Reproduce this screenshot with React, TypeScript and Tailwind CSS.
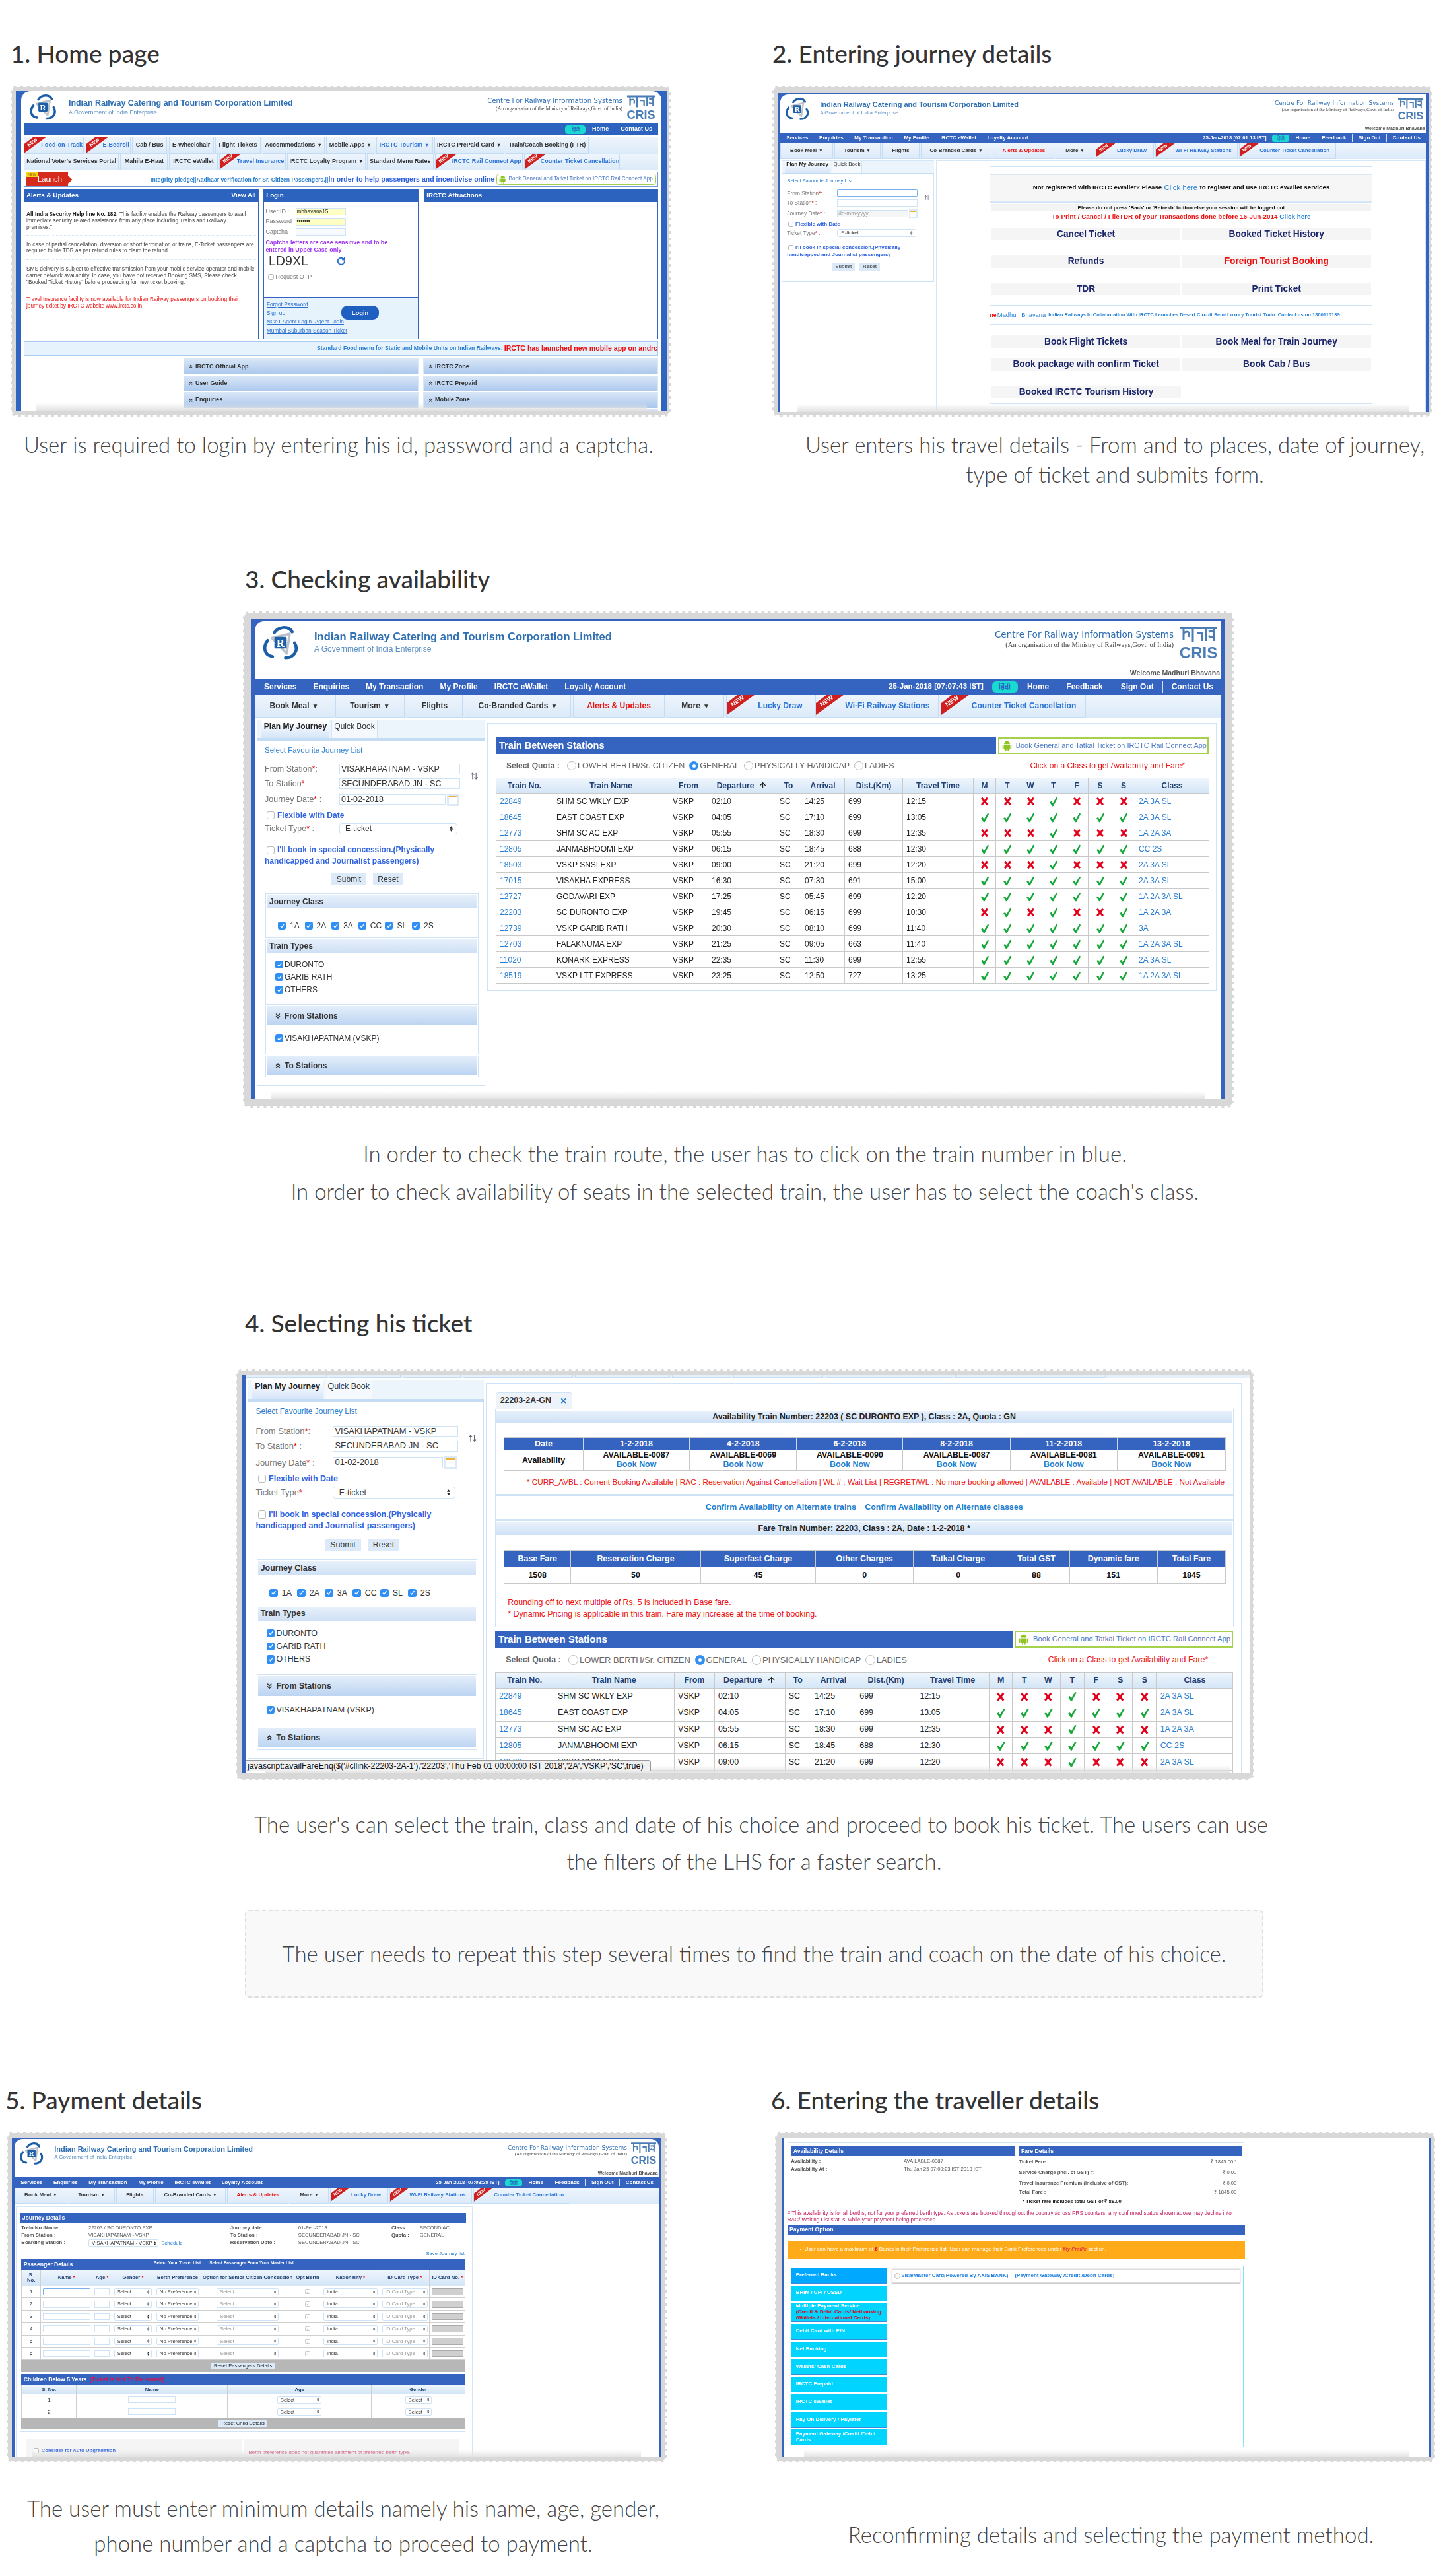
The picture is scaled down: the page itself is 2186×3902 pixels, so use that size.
import * as React from "react";
import { ChevronsDown, ChevronsUp, RotateCw, ArrowUp, ArrowUpDown, X } from "lucide-react";

// ---------- small drawings ----------

function RailLogo() {
  return (
    <svg viewBox="0 0 60 56" className="w-[56px] h-[52px] shrink-0" fill="none">
      <path d="M16 20 L45 13 L40 45 Z" stroke="#bcc2c9" strokeWidth="4" strokeLinejoin="round" />
      <path d="M20 11 C28 0 44 0 49 10" stroke="#1d5ea8" strokeWidth="5" strokeLinecap="round" />
      <path d="M9 24 C1 34 3 48 17 50" stroke="#1d5ea8" strokeWidth="5" strokeLinecap="round" />
      <path d="M53 28 C60 40 52 52 38 52" stroke="#1d5ea8" strokeWidth="5" strokeLinecap="round" />
      <rect x="20" y="18" width="20" height="19" rx="2" fill="#1d5ea8" />
      <text x="30" y="34" textAnchor="middle" fontSize="18" fontWeight="700" fill="#fff" fontFamily="Liberation Serif">R</text>
    </svg>
  );
}

function CrisLogo() {
  return (
    <div className="w-[57px] shrink-0 flex flex-col items-center text-[#4a7db5]">
      <svg viewBox="0 0 57 30" className="w-[57px] h-[30px]" fill="none" stroke="#4a7db5" strokeWidth="3">
        <path d="M0 4 H57" strokeWidth="4" />
        <path d="M6 4 V22 M6 12 C12 8 16 10 14 18 M20 4 V26 M26 12 H34 V24 M40 4 V24 M44 10 C50 8 54 10 52 16 C50 20 46 18 44 16 M52 4 V24" />
      </svg>
      <span className="font-['Liberation_Sans',sans-serif] text-[24px] leading-[24px] font-bold">CRIS</span>
    </div>
  );
}

function Tick() {
  return (
    <svg viewBox="0 0 16 18" className="w-[14px] h-[15px] inline-block">
      <path d="M1 10 L4 8 L6.5 12 L13 1 L15.5 2 L7.5 17 H5.5 Z" fill="#17a83c" />
    </svg>
  );
}

function Cross() {
  return (
    <svg viewBox="0 0 14 16" className="w-[13px] h-[14px] inline-block">
      <path d="M2 2 L12 14 M12 2 L2 14" stroke="#e3001b" strokeWidth="3.4" />
    </svg>
  );
}

function Android() {
  return (
    <svg viewBox="0 0 16 20" className="w-[15px] h-[18px] shrink-0" fill="#8fc31f">
      <path d="M3 7 a5 5 0 0 1 10 0 Z" />
      <rect x="3" y="8" width="10" height="8" rx="1" />
      <rect x="0.5" y="8" width="2" height="7" rx="1" />
      <rect x="13.5" y="8" width="2" height="7" rx="1" />
      <rect x="5" y="15" width="2" height="4" rx="1" />
      <rect x="9" y="15" width="2" height="4" rx="1" />
    </svg>
  );
}

function NewRibbon() {
  return (
    <svg viewBox="0 0 43 31" className="absolute left-0 top-0 w-[43px] h-[31px]">
      <path d="M0 13 L17 0 H43 L0 31 Z" fill="#cf1f1f" />
      <text x="0" y="0" transform="translate(9 19) rotate(-36)" fontSize="9.5" fontWeight="700" fill="#fff" fontFamily="Liberation Sans">NEW</text>
    </svg>
  );
}

function Check({ on }: { on?: boolean }) {
  if (on) {
    return (
      <span className="w-[12px] h-[12px] rounded-[3px] bg-[#2f8ff5] flex items-center justify-center shrink-0">
        <svg viewBox="0 0 10 10" className="w-[9px] h-[9px]" fill="none" stroke="#fff" strokeWidth="1.4">
          <path d="M2 5 L4 7.5 L8 2" />
        </svg>
      </span>
    );
  }
  return <span className="w-[12px] h-[12px] rounded-[3px] border border-[#bbb] bg-white shrink-0" />;
}

function Radio({ on }: { on?: boolean }) {
  return on ? (
    <span className="w-[14px] h-[14px] rounded-full bg-[#2f8ff5] flex items-center justify-center shrink-0">
      <span className="w-[5px] h-[5px] rounded-full bg-white" />
    </span>
  ) : (
    <span className="w-[14px] h-[14px] rounded-full border border-[#bbb] bg-white shrink-0" />
  );
}

function SelectArrows() {
  return (
    <svg viewBox="0 0 6 10" className="w-[5px] h-[9px] shrink-0" fill="#222">
      <path d="M3 0 L6 4 H0 Z M3 10 L0 6 H6 Z" />
    </svg>
  );
}

// ---------- shared page chrome ----------

type TabItem = { label: string; w: string; tone?: "red" | "blue"; isNew?: boolean; caret?: boolean };

const trainMenu: TabItem[] = [
  { label: "Book Meal", w: "w-[119px]", caret: true },
  { label: "Tourism", w: "w-[105px]", caret: true },
  { label: "Flights", w: "w-[85px]" },
  { label: "Co-Branded Cards", w: "w-[161px]", caret: true },
  { label: "Alerts & Updates", w: "w-[139px]", tone: "red" },
  { label: "More", w: "w-[87px]", caret: true },
  { label: "Lucky Draw", w: "w-[132px]", tone: "blue", isNew: true },
  { label: "Wi-Fi Railway Stations", w: "w-[187px]", tone: "blue", isNew: true },
  { label: "Counter Ticket Cancellation", w: "w-[220px]", tone: "blue", isNew: true },
];

const homeMenuOne: TabItem[] = [
  { label: "Food-on-Track", w: "w-[121px]", tone: "blue", isNew: true },
  { label: "E-Bedroll", w: "w-[90px]", tone: "blue", isNew: true },
  { label: "Cab / Bus", w: "w-[71px]" },
  { label: "E-Wheelchair", w: "w-[90px]" },
  { label: "Flight Tickets", w: "w-[92px]" },
  { label: "Accommodations", w: "w-[125px]", caret: true },
  { label: "Mobile Apps", w: "w-[97px]", caret: true },
  { label: "IRCTC Tourism", w: "w-[114px]", tone: "blue", caret: true },
  { label: "IRCTC PrePaid Card", w: "w-[140px]", caret: true },
  { label: "Train/Coach Booking (FTR)", w: "w-[167px]" },
];

const homeMenuTwo: TabItem[] = [
  { label: "National Voter's Services Portal", w: "w-[191px]" },
  { label: "Mahila E-Haat", w: "w-[95px]" },
  { label: "IRCTC eWallet", w: "w-[97px]" },
  { label: "Travel Insurance", w: "w-[134px]", tone: "blue", isNew: true },
  { label: "IRCTC Loyalty Program", w: "w-[157px]", caret: true },
  { label: "Standard Menu Rates", w: "w-[133px]" },
  { label: "IRCTC Rail Connect App", w: "w-[176px]", tone: "blue", isNew: true },
  { label: "Counter Ticket Cancellation", w: "w-[192px]", tone: "blue", isNew: true },
];

function MenuStrip({ items, height }: { items: TabItem[]; height: string }) {
  return (
    <div className={`flex gap-[3px] bg-gradient-to-b from-[#eef5fc] to-[#dbeaf9] ${height}`}>
      {items.map((t) => (
        <div
          key={t.label}
          className={`relative flex items-center justify-center shrink-0 border-x border-b border-[#c4dcf4] text-[12px] font-bold ${t.w} ${
            t.tone === "red" ? "text-[#ee1111]" : t.tone === "blue" ? "text-[#2c74d6]" : "text-[#333]"
          } ${t.isNew ? "pl-[32px]" : ""}`}
        >
          {t.isNew && <NewRibbon />}
          <span className="whitespace-nowrap">
            {t.label}
            {t.caret && <span className="ml-[4px] text-[10px]">▼</span>}
          </span>
        </div>
      ))}
    </div>
  );
}

function HeaderBand({ welcome, height }: { welcome?: boolean; height: string }) {
  return (
    <div className={`flex justify-between overflow-hidden ${height}`}>
      <div className="flex">
        <div className="ml-[11px] mt-[7px]">
          <RailLogo />
        </div>
        <div className="ml-[23px] mt-[14px]">
          <div className="text-[16.5px] leading-[19px] font-bold text-[#2f6fb3] whitespace-nowrap">
            Indian Railway Catering and Tourism Corporation Limited
          </div>
          <div className="text-[12px] leading-[16px] mt-[1px] text-[#5a8fc4]">A Government of India Enterprise</div>
        </div>
      </div>
      <div className="flex flex-col items-end">
        <div className="flex mt-[6px] mr-[6px] gap-[9px]">
          <div className="text-right mt-[5px]">
            <div className="font-['DejaVu_Sans',sans-serif] text-[13.5px] leading-[18px] text-[#2f6fb3] whitespace-nowrap">
              Centre For Railway Information Systems
            </div>
            <div className="font-['Liberation_Serif',serif] text-[10.5px] leading-[14px] text-[#444] whitespace-nowrap">
              (An organisation of the Ministry of Railways,Govt. of India)
            </div>
          </div>
          <CrisLogo />
        </div>
        {welcome && (
          <div className="mt-auto mb-[3px] mr-[2px] text-[10.5px] leading-[12px] font-bold text-[#555]">Welcome Madhuri Bhavana</div>
        )}
      </div>
    </div>
  );
}

function NavBar({ time }: { time: string }) {
  return (
    <div className="h-[24px] bg-[#3563c0] flex items-center justify-between text-white text-[12px] font-bold pl-[14px] pr-[12px] whitespace-nowrap">
      <div className="flex gap-[25px]">
        <span>Services</span>
        <span>Enquiries</span>
        <span>My Transaction</span>
        <span>My Profile</span>
        <span>IRCTC eWallet</span>
        <span>Loyalty Account</span>
      </div>
      <div className="flex items-center">
        <span className="text-[11.5px] mr-[13px]">{time}</span>
        <span className="w-[39px] h-[17px] rounded-[6px] bg-[#1ad9d0] text-[#2a64c0] text-[11px] leading-[17px] text-center mr-[14px]">हिंदी</span>
        <span className="pr-[12px] border-r border-white/80">Home</span>
        <span className="px-[13px] border-r border-white/80">Feedback</span>
        <span className="px-[13px] border-r border-white/80">Sign Out</span>
        <span className="pl-[13px]">Contact Us</span>
      </div>
    </div>
  );
}

function Frame({ outer, inner, children }: { outer: string; inner: string; children: React.ReactNode }) {
  return (
    <div className={`box-border border-2 border-dashed border-white rounded-[9px] bg-[#d8d8d8] ${outer}`}>
      <div className={`relative h-full overflow-hidden ${inner}`}>
        {children}
        <div className="absolute bottom-0 inset-x-[30px] h-[12px] bg-gradient-to-t from-[#e2e2e2] to-transparent" />
      </div>
    </div>
  );
}

// ---------- journey form + filters ----------

function FilterHead({ label, tall, open }: { label: string; tall?: boolean; open?: boolean }) {
  if (tall) {
    return (
      <div className="mx-[1px] mt-[2px] h-[29px] flex items-center pl-[11px] gap-[4px] bg-gradient-to-b from-[#e4eefa] to-[#bcd4f2] text-[12px] font-bold text-[#333]">
        {open ? <ChevronsDown size={12} strokeWidth={3} /> : <ChevronsUp size={12} strokeWidth={3} />}
        {label}
      </div>
    );
  }
  return (
    <div className="mx-[1px] mt-[1px] h-[21px] flex items-center pl-[4px] bg-gradient-to-b from-[#e8f1fb] to-[#cfe0f5] text-[12px] font-bold text-[#333]">
      {label}
    </div>
  );
}

function Filters() {
  return (
    <div className="ml-[12px] w-[323px] mt-[12px] text-[12px] text-[#333] mb-[12px]">
      <div className="h-[68px] border border-[#cfe3f7]">
        <FilterHead label="Journey Class" />
        <div className="flex pl-[18px] mt-[17px]">
          {["1A", "2A", "3A", "CC", "SL", "2S"].map((c) => (
            <div key={c} className="w-[40.6px] flex items-center gap-[6px]">
              <Check on />
              <span>{c}</span>
            </div>
          ))}
        </div>
      </div>
      <div className="h-[100px] border border-t-0 border-[#cfe3f7]">
        <FilterHead label="Train Types" />
        <div className="flex flex-col gap-[7px] pl-[14px] mt-[12px] leading-[12px]">
          {["DURONTO", "GARIB RATH", "OTHERS"].map((t) => (
            <div key={t} className="flex items-center gap-[2px]">
              <Check on />
              <span>{t}</span>
            </div>
          ))}
        </div>
      </div>
      <div className="h-[73px] border border-t-0 border-[#cfe3f7]">
        <FilterHead label="From Stations" tall open />
        <div className="flex items-center gap-[2px] pl-[14px] mt-[14px] leading-[12px]">
          <Check on />
          <span>VISAKHAPATNAM (VSKP)</span>
        </div>
      </div>
      <div className="h-[33px] border border-t-0 border-[#cfe3f7]">
        <FilterHead label="To Stations" tall />
      </div>
    </div>
  );
}

function FieldLabel({ text, after }: { text: string; after: string }) {
  return (
    <span className="w-[113px] shrink-0 text-[12.5px] text-[#777]">
      {text}
      <span className="text-[#e00]">*</span>
      {after}
    </span>
  );
}

function JourneySidebar({ from, to, date, placeholder, children }: { from: string; to: string; date: string; placeholder?: boolean; children?: React.ReactNode }) {
  return (
    <div className="w-[346px] shrink-0 ml-[3px] mt-[3px]">
      <div className="h-[32px] flex pl-[7px] gap-[3px] border-b-[4px] border-[#c5dcf5] bg-[#edf5fc] text-[12px] border-t border-t-[#d5e6f7]">
        <div className="w-[103px] h-full bg-gradient-to-b from-white to-[#d5e5f8] font-bold text-[#222] text-center leading-[16px] pt-[1px]">Plan My Journey</div>
        <div className="w-[70px] h-[27px] bg-[#f5f9fd] border-x border-[#d0e3f7] text-[#333] text-center leading-[16px] pt-[1px]">Quick Book</div>
      </div>
      <div className="border border-t-0 border-[#cfe3f7]">
        <div className="h-[32px] pl-[11px] pt-[6px] text-[11.5px] text-[#2a80d0]">Select Favourite Journey List</div>
        <div className="relative">
          <div className="h-[22px] flex items-center pl-[11px]">
            <FieldLabel text="From Station" after=":" />
            <div className={`w-[183px] h-[16px] border bg-white text-[12.5px] leading-[14px] pl-[2px] text-[#333] ${placeholder ? "border-2 border-[#79aef0] rounded-[2px]" : "border-[#cfe3f7]"}`}>{from}</div>
          </div>
          <div className="h-[22px] flex items-center pl-[11px]">
            <FieldLabel text="To Station" after=" :" />
            <div className="w-[183px] h-[16px] border border-[#cfe3f7] bg-white text-[12.5px] leading-[14px] pl-[2px] text-[#333]">{to}</div>
          </div>
          <ArrowUpDown size={13} className="absolute left-[322px] top-[15px] text-[#667]" />
        </div>
        <div className="h-[26px] flex items-center pl-[11px]">
          <FieldLabel text="Journey Date" after=" :" />
          <div className={`w-[161px] h-[16px] border border-[#cfe3f7] text-[12.5px] leading-[14px] pl-[2px] ${placeholder ? "bg-[#f4f6f8] text-[#999]" : "bg-white text-[#333]"}`}>{date}</div>
          <div className="w-[19px] h-[19px] ml-[2px] bg-[#dce9f7] p-[3px]">
            <div className="h-full border-t-[3px] border-[#f0b030] bg-white" />
          </div>
        </div>
        <div className="h-[22px] flex items-center pl-[14px] gap-[4px] text-[12px] font-bold text-[#2f63e0]">
          <Check />
          <span>Flexible with Date</span>
        </div>
        <div className="h-[18px] flex items-center pl-[11px]">
          <FieldLabel text="Ticket Type" after=" :" />
          <div className="w-[179px] h-[17px] border border-[#cfe3f7] rounded-[4px] bg-white flex items-center justify-between pl-[8px] pr-[6px] text-[12px] text-[#333]">
            E-ticket
            <SelectArrows />
          </div>
        </div>
        <div className="mt-[15px] pl-[11px] text-[12px] leading-[17px] font-bold text-[#2f63e0]">
          <div className="flex items-center gap-[4px] pl-[3px]">
            <Check />
            <span>I'll book in special concession.(Physically</span>
          </div>
          <div>handicapped and Journalist passengers)</div>
        </div>
        <div className="flex gap-[10px] pl-[112px] mt-[10px] text-[12px] text-[#333]">
          <div className="w-[53px] h-[18px] bg-[#dbe9f8] text-center leading-[18px]">Submit</div>
          <div className="w-[46px] h-[18px] bg-[#dbe9f8] text-center leading-[18px]">Reset</div>
        </div>
        {children ?? <div className="h-[23px]" />}
      </div>
    </div>
  );
}

// ---------- train table ----------

const trains = [
  ["22849", "SHM SC WKLY EXP", "02:10", "14:25", "699", "12:15", "xxxvxxx", "2A 3A SL"],
  ["18645", "EAST COAST EXP", "04:05", "17:10", "699", "13:05", "vvvvvvv", "2A 3A SL"],
  ["12773", "SHM SC AC EXP", "05:55", "18:30", "699", "12:35", "xxxvxxx", "1A 2A 3A"],
  ["12805", "JANMABHOOMI EXP", "06:15", "18:45", "688", "12:30", "vvvvvvv", "CC 2S"],
  ["18503", "VSKP SNSI EXP", "09:00", "21:20", "699", "12:20", "xxxvxxx", "2A 3A SL"],
  ["17015", "VISAKHA EXPRESS", "16:30", "07:30", "691", "15:00", "vvvvvvv", "2A 3A SL"],
  ["12727", "GODAVARI EXP", "17:25", "05:45", "699", "12:20", "vvvvvvv", "1A 2A 3A SL"],
  ["22203", "SC DURONTO EXP", "19:45", "06:15", "699", "10:30", "xvxvxxv", "1A 2A 3A"],
  ["12739", "VSKP GARIB RATH", "20:30", "08:10", "699", "11:40", "vvvvvvv", "3A"],
  ["12703", "FALAKNUMA EXP", "21:25", "09:05", "663", "11:40", "vvvvvvv", "1A 2A 3A SL"],
  ["11020", "KONARK EXPRESS", "22:35", "11:30", "699", "12:55", "vvvvvvv", "2A 3A SL"],
  ["18519", "VSKP LTT EXPRESS", "23:25", "12:50", "727", "13:25", "vvvvvvv", "1A 2A 3A SL"],
];

const trainCols = [86, 176, 59, 103, 38, 66, 88, 107, 34, 35, 35, 35, 35, 36, 35, 112];

function TrainSection() {
  const heads = ["Train No.", "Train Name", "From", "Departure", "To", "Arrival", "Dist.(Km)", "Travel Time", "M", "T", "W", "T", "F", "S", "S", "Class"];
  const cell = "border border-[#c9c9c9] px-[5px]";
  return (
    <div className="ml-[12px] w-[1080px]">
      <div className="flex h-[25px]">
        <div className="w-[762px] bg-[#3563c0] text-white font-bold text-[14.5px] leading-[25px] pl-[5px]">Train Between Stations</div>
        <div className="ml-[3px] w-[321px] h-[25px] border-2 border-[#a6d14c] flex items-center pl-[4px] gap-[6px] text-[10.9px] text-[#4a79c8] whitespace-nowrap">
          <Android />
          Book General and Tatkal Ticket on IRCTC Rail Connect App
        </div>
      </div>
      <div className="h-[36px] flex items-center text-[12.5px] text-[#666] whitespace-nowrap">
        <span className="ml-[16px] w-[92px] text-[12px] font-bold">Select Quota :</span>
        <span className="flex items-center gap-[2px]"><Radio />LOWER BERTH/Sr. CITIZEN</span>
        <span className="ml-[7px] flex items-center gap-[2px]"><Radio on />GENERAL</span>
        <span className="ml-[7px] flex items-center gap-[2px]"><Radio />PHYSICALLY HANDICAP</span>
        <span className="ml-[7px] flex items-center gap-[2px]"><Radio />LADIES</span>
        <span className="ml-auto mr-[36px] text-[#ee1111] text-[12px]">Click on a Class to get Availability and Fare*</span>
      </div>
      <table className="table-fixed border-collapse w-[1080px] text-[12px] text-[#222]">
        <colgroup>
          {trainCols.map((w, i) => (
            <col key={i} style={{ width: w }} />
          ))}
        </colgroup>
        <thead>
          <tr className="h-[23px] bg-gradient-to-b from-[#eef5fc] to-[#d3e5f7] text-[#1f3f72] font-bold text-center">
            {heads.map((h, i) => (
              <td key={i} className={cell}>
                {h}
                {h === "Departure" && <ArrowUp size={13} strokeWidth={2.5} className="inline-block ml-[7px] text-[#222] -mt-[2px]" />}
              </td>
            ))}
          </tr>
        </thead>
        <tbody>
          {trains.map((t) => (
            <tr key={t[0]} className="h-[24px]">
              <td className={`${cell} text-[#2a7fd0]`}>{t[0]}</td>
              <td className={cell}>{t[1]}</td>
              <td className={cell}>VSKP</td>
              <td className={cell}>{t[2]}</td>
              <td className={cell}>SC</td>
              <td className={cell}>{t[3]}</td>
              <td className={cell}>{t[4]}</td>
              <td className={cell}>{t[5]}</td>
              {t[6].split("").map((d, i) => (
                <td key={i} className="border border-[#c9c9c9] text-center align-middle">
                  {d === "v" ? <Tick /> : <Cross />}
                </td>
              ))}
              <td className={`${cell} text-[#2a7fd0] whitespace-nowrap`}>{t[7]}</td>
            </tr>
          ))}
        </tbody>
      </table>
    </div>
  );
}

// ---------- shot 1 ----------

function HomeShot() {
  const accordions = [
    ["IRCTC Official App", "IRCTC Zone"],
    ["User Guide", "IRCTC Prepaid"],
    ["Enquiries", "Mobile Zone"],
    ["", ""],
  ];
  return (
    <Frame outer="w-[1000px] h-[501px] pl-[6px] pr-[4px] pt-[6px] pb-[7px]" inner="bg-[#2f65c0] px-[8px] blur-[0.5px]">
      <div className="bg-white h-full rounded-t-[14px] overflow-hidden pl-[4px]">
        <div className="[zoom:0.755] w-[1273px] font-['Liberation_Sans',sans-serif]">
          <HeaderBand height="h-[65px]" />
          <div className="h-[24px] bg-[#2b63be] flex items-center justify-end text-white text-[12px] font-bold pr-[12px]">
            <span className="w-[41px] h-[17px] rounded-[6px] bg-[#1ad9d0] text-[#2a64c0] text-[11px] leading-[17px] text-center mr-[13px]">हिंदी</span>
            <span className="mr-[24px]">Home</span>
            <span>Contact Us</span>
          </div>
          <div className="h-[4px]" />
          <MenuStrip items={homeMenuOne} height="h-[33px]" />
          <MenuStrip items={homeMenuTwo} height="h-[33px]" />
          <div className="mt-[3px] h-[30px] border border-[#6d9ade] flex items-center pl-[4px] pr-[3px]">
            <div className="relative w-[84px] h-[27px] bg-[#d62a1c] text-white text-[15px] leading-[27px] text-center pl-[10px] shrink-0">
              Launch
              <span className="absolute left-0 top-0 w-[22px] h-[9px] bg-[#f3d81c] text-[#a04a00] text-[7px] leading-[9px]">NEW</span>
              <span className="absolute -right-[5px] top-[9px] w-[10px] h-[10px] bg-[#d62a1c] rotate-45" />
            </div>
            <div className="flex-1 overflow-hidden whitespace-nowrap font-bold text-[#2a7fd0] text-[11.5px] text-right">
              Integrity pledge||Aadhaar verification for Sr. Citizen Passengers.||<span className="text-[14px] text-[#2c5fe0]">In order to help passengers and incentivise online</span>
            </div>
            <div className="ml-[4px] w-[320px] h-[23px] border-2 border-[#a6d14c] rounded-[6px] flex items-center pl-[3px] gap-[5px] text-[10.9px] text-[#4a79c8] whitespace-nowrap shrink-0">
              <Android />
              Book General and Tatkal Ticket on IRCTC Rail Connect App
            </div>
          </div>
          <div className="mt-[4px] h-[302px] flex gap-[10px]">
            <div className="w-[471px] border border-[#3563c0] flex flex-col">
              <div className="h-[25px] bg-[#2b63be] text-white font-bold text-[13px] flex items-center justify-between px-[4px]">
                <span>Alerts &amp; Updates</span>
                <span>View All</span>
              </div>
              <div className="text-[11px] leading-[12.7px] text-[#444] mt-[6px] px-[4px]">
                <div className="h-[60px] border-t-2 border-dotted border-[#d7e6f7] pt-[12px]">
                  <b className="text-[#222]">All India Security Help line No. 182:</b> This facility enables the Railway passengers to avail
                  <br />
                  immediate security related assistance from any place including Trains and Railway
                  <br />
                  premises."
                </div>
                <div className="h-[50px] border-t-2 border-dotted border-[#d7e6f7] pt-[12px]">
                  In case of partial cancellation, diversion or short termination of trains, E-Ticket passengers are required to file TDR as per refund rules to claim the refund.
                </div>
                <div className="h-[61px] border-t-2 border-dotted border-[#d7e6f7] pt-[12px]">
                  SMS delivery is subject to effective transmission from your mobile service operator and mobile carrier network availability. In case, you have not received Booking SMS, Please check "Booked Ticket History" before proceeding for new ticket booking.
                </div>
                <div className="border-t-2 border-dotted border-[#d7e6f7] pt-[12px] text-[#ee1111]">
                  Travel Insurance facility is now available for Indian Railway passengers on booking their journey ticket by IRCTC website www.irctc.co.in.
                </div>
              </div>
            </div>
            <div className="w-[311px] border border-[#3563c0] flex flex-col">
              <div className="h-[25px] bg-[#2b63be] text-white font-bold text-[13px] flex items-center px-[4px]">Login</div>
              <div className="flex-1 pl-[3px] pt-[9px] text-[12px] text-[#777]">
                {[["User ID :", "mbhavana15", "bg-[#ffffc4]"], ["Password", "•••••••", "bg-[#ffffc4]"], ["Captcha", "", "bg-[#f7fbff]"]].map(([l, v, bg]) => (
                  <div key={l} className="h-[20.8px] flex items-center">
                    <span className="w-[60px]">{l}</span>
                    <span className={`w-[101px] h-[15px] border border-[#cfe3f7] text-[11px] leading-[13px] pl-[1px] text-[#333] ${bg}`}>{v}</span>
                  </div>
                ))}
                <div className="mt-[3px] text-[11.8px] leading-[14.5px] font-bold text-[#9b30f0]">
                  Captcha letters are case sensitive and to be
                  <br />
                  entered in Upper Case only
                </div>
                <div className="flex items-center h-[30px] pl-[6px] mt-[1px]">
                  <span className="text-[26px] text-[#333] w-[137px]">LD9XL</span>
                  <RotateCw size={18} strokeWidth={3.5} className="text-[#2a6fd0]" />
                </div>
                <div className="flex items-center gap-[3px] pl-[5px] mt-[7px]">
                  <Check />
                  <span>Request OTP</span>
                </div>
              </div>
              <div className="relative h-[84px] bg-[#e6f2fc] border-t border-[#3563c0] pl-[5px] pt-[6px] text-[11px] leading-[17.5px] text-[#2a6fd0] underline">
                <div>Forgot Password</div>
                <div>Sign up</div>
                <div>NGeT Agent Login&nbsp;&nbsp;Agent Login</div>
                <div>Mumbai Suburban Season Ticket</div>
                <div className="absolute left-[155px] top-[16px] w-[75px] h-[28px] rounded-[12px] bg-[#1f5fbf] text-white text-[12.5px] font-bold leading-[28px] text-center no-underline">Login</div>
              </div>
            </div>
            <div className="flex-1 ml-[1px] border border-[#3563c0]">
              <div className="h-[25px] bg-[#2b63be] text-white font-bold text-[13px] flex items-center px-[4px]">IRCTC Attractions</div>
            </div>
          </div>
          <div className="mt-[4px] h-[29px] border border-[#a9cdf0] bg-[#e6f2fc] flex items-center justify-end overflow-hidden whitespace-nowrap font-bold text-[11.5px] text-[#2a7fd0]">
            Standard Food menu for Static and Mobile Units on Indian Railways.&nbsp;
            <span className="text-[14px] text-[#ee1111]">IRCTC has launched new mobile app on andrc</span>
          </div>
          <div className="mt-[6px] ml-[320px] grid grid-cols-2 gap-x-[9px] gap-y-[1.4px] w-[953px]">
            {accordions.flat().map((a, i) => (
              <div key={i} className="h-[32px] flex items-center gap-[4px] pl-[8px] bg-gradient-to-b from-[#dae7f7] to-[#aac7ec] border-x border-[#d8e6f6] text-[12px] font-bold text-[#333]">
                {a && <ChevronsUp size={11} strokeWidth={3} />}
                {a}
              </div>
            ))}
          </div>
        </div>
      </div>
    </Frame>
  );
}

// ---------- shot 2 ----------

function BigLink({ label, red }: { label: string; red?: boolean }) {
  return (
    <div className={`h-[29px] bg-[#f5f5f5] text-center text-[20.5px] leading-[29px] font-bold whitespace-nowrap ${red ? "text-[#ee1111]" : "text-[#1a2468]"}`}>{label}</div>
  );
}

function JourneyShot() {
  return (
    <Frame outer="w-[1000px] h-[501px] pl-[6px] pr-[3px] pt-[9px] pb-[5px]" inner="bg-[#3563c0] pl-[4px] pr-[5px] pt-[2px] blur-[0.5px]">
      <div className="bg-white h-full rounded-tl-[12px] overflow-hidden">
        <div className="[zoom:0.669] w-[1462px] font-['Liberation_Sans',sans-serif]">
          <HeaderBand welcome height="h-[87px]" />
          <NavBar time="25-Jan-2018 [07:01:13 IST]" />
          <MenuStrip items={trainMenu} height="h-[35px]" />
          <div className="flex">
            <JourneySidebar from="" to="" date="dd-mm-yyyy" placeholder />
            <div className="flex-1 h-[600px] ml-[4px] mt-[3px] border border-[#d5e6f7]">
              <div className="w-[867px] ml-[120px] text-[#111]">
                <div className="h-[3px] mt-[11px] bg-[#cfe3f7]" />
                <div className="mt-[16px] h-[63px] bg-[#f6f6f6] border border-[#d9e7f7] flex items-center justify-center gap-[5px] text-[14.5px] font-bold whitespace-nowrap">
                  Not registered with IRCTC eWallet? Please <span className="text-[17px] font-normal text-[#1f7fd8]">Click here</span> to register and use IRCTC eWallet services
                </div>
                <div className="h-[235px] border-x border-b border-t-2 border-[#cfe3f7] px-[2px]">
                  <div className="mt-[3px] h-[17px] bg-[#f3f3f3] text-center text-[12px] leading-[17px] font-bold">Please do not press 'Back' or 'Refresh' button else your session will be logged out</div>
                  <div className="mt-[3px] h-[18px] text-center text-[14.8px] leading-[18px] font-bold text-[#ee1111] whitespace-nowrap">
                    To Print / Cancel / FileTDR of your Transactions done before 16-Jun-2014 <span className="text-[#1f7fd8]">Click here</span>
                  </div>
                  <div className="mt-[16px] grid grid-cols-2 gap-x-[3px] gap-y-[33px]">
                    <BigLink label="Cancel Ticket" />
                    <BigLink label="Booked Ticket History" />
                    <BigLink label="Refunds" />
                    <BigLink label="Foreign Tourist Booking" red />
                    <BigLink label="TDR" />
                    <BigLink label="Print Ticket" />
                  </div>
                </div>
                <div className="h-[42px] flex items-center whitespace-nowrap overflow-hidden font-bold text-[11.3px] text-[#1f7fd8]">
                  <span className="text-[#ee1111] text-[13px]">ne</span>
                  <span className="text-[14px] font-normal ml-[2px] mr-[6px]">Madhuri Bhavana</span>
                  Indian Railways In Collaboration With IRCTC Launches Desert Circuit Semi Luxury Tourist Train. Contact us on 1800110139.
                </div>
                <div className="h-[180px] border border-[#cfe3f7] px-[2px] pt-[23px]">
                  <div className="grid grid-cols-2 gap-x-[3px] gap-y-[23px]">
                    <BigLink label="Book Flight Tickets" />
                    <BigLink label="Book Meal for Train Journey" />
                    <BigLink label="Book package with confirm Ticket" />
                    <BigLink label="Book Cab / Bus" />
                  </div>
                  <div className="mt-[33px] w-[430px]">
                    <BigLink label="Booked IRCTC Tourism History" />
                  </div>
                </div>
              </div>
            </div>
          </div>
        </div>
      </div>
    </Frame>
  );
}

// ---------- shot 3 ----------

function AvailabilityShot() {
  return (
    <Frame outer="w-[1501px] h-[752px] pl-[10px] pr-[12px] pt-[10px] pb-[11px]" inner="bg-[#3563c0] pl-[6px] pr-[5px] pt-[3px] blur-[0.35px]">
      <div className="bg-white h-full rounded-tl-[14px] overflow-hidden font-['Liberation_Sans',sans-serif]">
        <HeaderBand welcome height="h-[87px]" />
        <NavBar time="25-Jan-2018 [07:07:43 IST]" />
        <MenuStrip items={trainMenu} height="h-[35px]" />
        <div className="flex">
          <JourneySidebar from="VISAKHAPATNAM - VSKP" to="SECUNDERABAD JN - SC" date="01-02-2018">
            <Filters />
          </JourneySidebar>
          <div className="ml-[3px] mt-[8px] w-[1105px] self-start border border-[#cfe3f7] pt-[21px] pb-[10px]">
            <TrainSection />
          </div>
        </div>
      </div>
    </Frame>
  );
}

// ---------- shot 4 ----------

const availColumns = [
  { date: "1-2-2018", w: "w-[156px]", seats: "AVAILABLE-0087" },
  { date: "4-2-2018", w: "w-[157px]", seats: "AVAILABLE-0069" },
  { date: "6-2-2018", w: "w-[156px]", seats: "AVAILABLE-0090" },
  { date: "8-2-2018", w: "w-[157px]", seats: "AVAILABLE-0087" },
  { date: "11-2-2018", w: "w-[157px]", seats: "AVAILABLE-0081" },
  { date: "13-2-2018", w: "w-[158px]", seats: "AVAILABLE-0091" },
];

const fareColumns = [
  { head: "Base Fare", val: "1508", w: "w-[98px]" },
  { head: "Reservation Charge", val: "50", w: "w-[190px]" },
  { head: "Superfast Charge", val: "45", w: "w-[169px]" },
  { head: "Other Charges", val: "0", w: "w-[143px]" },
  { head: "Tatkal Charge", val: "0", w: "w-[132px]" },
  { head: "Total GST", val: "88", w: "w-[97px]" },
  { head: "Dynamic fare", val: "151", w: "w-[129px]" },
  { head: "Total Fare", val: "1845", w: "w-[99px]" },
];

function BoxBar({ children }: { children: React.ReactNode }) {
  return (
    <div className="mt-[2px] mx-[1px] h-[18px] bg-gradient-to-b from-[#e8f1fb] to-[#cfe1f6] text-center text-[12px] leading-[18px] font-bold text-[#222] whitespace-nowrap">{children}</div>
  );
}

function TicketShot() {
  return (
    <Frame outer="w-[1543px] h-[622px] pl-[7px] pr-[5px] pt-[7px] pb-[8px]" inner="bg-white border-l-[6px] border-[#3563c0] blur-[0.35px]">
      <div className="[zoom:1.035] w-[1470px] font-['Liberation_Sans',sans-serif]">
        <div className="flex gap-[3px] h-[4px] bg-[#e6f0fa]">
          {trainMenu.map((t) => (
            <div key={t.label} className={`${t.w} border-x border-b border-[#c4dcf4]`} />
          ))}
        </div>
        <div className="flex">
          <JourneySidebar from="VISAKHAPATNAM - VSKP" to="SECUNDERABAD JN - SC" date="01-02-2018">
            <Filters />
          </JourneySidebar>
          <div className="ml-[3px] mt-[8px] w-[1106px] border border-[#cfe3f7] pt-[12px]">
            <div className="ml-[13px] w-[112px] h-[24px] bg-[#eef3f9] border border-b-0 border-[#cfe3f7] rounded-t-[4px] flex items-center justify-center gap-[13px] text-[12px] font-bold text-[#333]">
              22203-2A-GN
              <X size={11} strokeWidth={4} className="text-[#2a7fd0]" />
            </div>
            <div className="ml-[12px] w-[1081px] h-[126px] border border-[#cfe3f7]">
              <BoxBar>Availability Train Number: 22203 ( SC DURONTO EXP ), Class : 2A, Quota : GN</BoxBar>
              <div className="ml-[12px] mt-[21px] w-[1057px] border border-[#c9c9c9] text-[12px] text-center font-bold">
                <div className="flex h-[18px] bg-[#3563c0] text-white leading-[18px]">
                  <div className="w-[116px] border-r border-[#c9d6ef]">Date</div>
                  {availColumns.map((c) => (
                    <div key={c.date} className={`${c.w} border-r border-[#c9d6ef] last:border-r-0`}>{c.date}</div>
                  ))}
                </div>
                <div className="flex h-[29px] leading-[14px] text-[#111]">
                  <div className="w-[116px] border-r border-[#c9c9c9] leading-[29px]">Availability</div>
                  {availColumns.map((c) => (
                    <div key={c.date} className={`${c.w} border-r border-[#c9c9c9] last:border-r-0`}>
                      {c.seats}
                      <div className="text-[#1f7fd0]">Book Now</div>
                    </div>
                  ))}
                </div>
              </div>
              <div className="mt-[9px] pr-[12px] text-right text-[11.4px] leading-[16px] text-[#ee1111] whitespace-nowrap">
                * CURR_AVBL : Current Booking Available | RAC : Reservation Against Cancellation | WL # : Wait List | REGRET/WL : No more booking allowed | AVAILABLE : Available | NOT AVAILABLE : Not Available
              </div>
            </div>
            <div className="ml-[12px] w-[1081px] h-[37px] border border-t-2 border-[#cfe3f7] flex items-center justify-center gap-[13px] text-[12px] font-bold text-[#1f7fd0]">
              <span>Confirm Availability on Alternate trains</span>
              <span>Confirm Availability on Alternate classes</span>
            </div>
            <div className="ml-[12px] w-[1081px] h-[157px] border border-t-2 border-[#cfe3f7]">
              <BoxBar>Fare Train Number: 22203, Class : 2A, Date : 1-2-2018 *</BoxBar>
              <div className="ml-[12px] mt-[22px] flex w-[1057px] border border-[#c9c9c9] text-[12px] text-center font-bold">
                {fareColumns.map((c) => (
                  <div key={c.head} className={`${c.w} border-r border-[#c9c9c9] last:border-r-0`}>
                    <div className="h-[24px] bg-[#3563c0] text-white leading-[24px]">{c.head}</div>
                    <div className="h-[24px] leading-[24px] text-[#111]">{c.val}</div>
                  </div>
                ))}
              </div>
              <div className="ml-[18px] mt-[19px] text-[12px] leading-[17px] text-[#ee1111]">
                Rounding off to next multiple of Rs. 5 is included in Base fare.
                <br />* Dynamic Pricing is applicable in this train. Fare may increase at the time of booking.
              </div>
            </div>
            <div className="mt-[5px]">
              <TrainSection />
            </div>
          </div>
        </div>
      </div>
      <div className="absolute left-0 bottom-[3px] w-[614px] h-[17px] bg-[#f0f0f0] border-t border-r border-[#999] rounded-tr-[4px] pl-[3px] text-[12.5px] leading-[17px] text-[#111] whitespace-nowrap font-['Liberation_Sans',sans-serif] z-10">
        javascript:availFareEnq($('#cllink-22203-2A-1'),'22203','Thu Feb 01 00:00:00 IST 2018','2A','VSKP','SC',true)
      </div>
      <div className="absolute left-0 bottom-0 w-[80px] h-[1px] bg-[#333]" />
      <div className="absolute right-0 bottom-0 w-[60px] h-[1px] bg-[#333]" />
    </Frame>
  );
}

// ---------- shot 5 ----------

function FakeSelect({ w, label, muted }: { w: string; label: string; muted?: boolean }) {
  return (
    <span className={`inline-flex items-center justify-between h-[17px] border border-[#cfe3f7] rounded-[3px] bg-white pl-[6px] pr-[4px] text-[11.5px] ${w} ${muted ? "text-[#999]" : "text-[#333]"}`}>
      {label}
      <SelectArrows />
    </span>
  );
}

const paxCols = [43, 117, 44, 96, 106, 211, 61, 133, 113, 80];
const childCols = [124, 342, 326, 212];

function PaymentShot() {
  const paxHead = ["S.\nNo.", "Name", "Age", "Gender", "Berth Preference", "Option for Senior Citizen Concession", "Opt Berth", "Nationality", "ID Card Type", "ID Card No."];
  const req = [1, 2, 3, 7, 8, 9];
  const td = "border border-[#cfcfcf] text-center";
  return (
    <Frame outer="w-[1000px] h-[501px] pl-[6px] pr-[7px] pt-[7px] pb-[6px]" inner="bg-[#3563c0] pl-[4px] pr-[3px] pt-[2px] blur-[0.5px]">
      <div className="bg-white h-full rounded-t-[12px] overflow-hidden">
        <div className="[zoom:0.669] w-[1459px] font-['Liberation_Sans',sans-serif]">
          <HeaderBand welcome height="h-[87px]" />
          <NavBar time="25-Jan-2018 [07:08:29 IST]" />
          <MenuStrip items={trainMenu} height="h-[35px]" />
          <div className="ml-[3px] mt-[7px] w-[1035px] border border-[#d5e6f7] pt-[13px] pl-[8px]">
            <div className="w-[1010px] h-[23px] bg-[#3563c0] text-white text-[13px] font-bold leading-[23px] pl-[5px]">Journey Details</div>
            <div className="grid grid-cols-[152px_321px_365px_1fr] pl-[3px] mt-[2px] text-[11.5px] leading-[17px] text-[#555] whitespace-nowrap">
              <b>Train No./Name :</b>
              <span>22203 / SC DURONTO EXP</span>
              <span className="flex"><b className="w-[154px]">Journey date :</b>01-Feb-2018</span>
              <span className="flex"><b className="w-[64px]">Class :</b>SECOND AC</span>
              <b>From Station :</b>
              <span>VISAKHAPATNAM - VSKP</span>
              <span className="flex"><b className="w-[154px]">To Station :</b>SECUNDERABAD JN - SC</span>
              <span className="flex"><b className="w-[64px]">Quota :</b>GENERAL</span>
              <b className="leading-[19px]">Boarding Station :</b>
              <span className="flex items-center gap-[7px]"><FakeSelect w="w-[158px]" label="VISAKHAPATNAM - VSKP" /><span className="text-[#2a7fd0]">Schedule</span></span>
              <span className="flex leading-[19px]"><b className="w-[154px]">Reservation Upto :</b>SECUNDERABAD JN - SC</span>
              <span />
            </div>
            <div className="w-[1007px] text-right text-[11.5px] leading-[16px] mt-[7px] text-[#2a7fd0]">Save Journey list</div>
            <div className="ml-[3px] w-[1004px] mt-[3px]">
              <div className="h-[25px] bg-[#3563c0] text-white relative">
                <span className="absolute left-[5px] top-[4px] text-[13px] font-bold">Passenger Details</span>
                <span className="absolute left-[300px] top-[2px] text-[10px] font-bold">Select Your Travel List</span>
                <span className="absolute left-[426px] top-[2px] text-[10px] font-bold">Select Passenger From Your Master List</span>
              </div>
              <table className="table-fixed border-collapse w-[1004px] text-[11.5px] text-[#222]">
                <colgroup>
                  {paxCols.map((w, i) => (
                    <col key={i} style={{ width: w }} />
                  ))}
                </colgroup>
                <thead>
                  <tr className="h-[35px] bg-gradient-to-b from-[#eef5fc] to-[#d3e5f7] font-bold text-[#1f3f72] leading-[12px]">
                    {paxHead.map((h, i) => (
                      <td key={i} className={`${td} whitespace-pre-line`}>
                        {h}
                        {req.includes(i) && <span className="text-[#e00]"> *</span>}
                      </td>
                    ))}
                  </tr>
                </thead>
                <tbody>
                  {[1, 2, 3, 4, 5, 6].map((n) => (
                    <tr key={n} className="h-[28px]">
                      <td className={td}>{n}</td>
                      <td className={td}>
                        <span className={`block mx-auto w-[108px] h-[16px] ${n === 1 ? "border-2 border-[#79aef0] rounded-[2px]" : "border border-[#cfe3f7]"}`} />
                      </td>
                      <td className={td}><span className="block mx-auto w-[35px] h-[16px] border border-[#cfe3f7]" /></td>
                      <td className={td}><FakeSelect w="w-[86px]" label="Select" /></td>
                      <td className={td}><FakeSelect w="w-[96px]" label="No Preference" /></td>
                      <td className={td}><FakeSelect w="w-[140px]" label="Select" muted /></td>
                      <td className={td}><span className="inline-block w-[11px] h-[11px] border border-[#ccc] rounded-[2px] text-[8px] leading-[10px] text-[#999]">✓</span></td>
                      <td className={td}><FakeSelect w="w-[122px]" label="India" /></td>
                      <td className={td}><FakeSelect w="w-[103px]" label="ID Card Type" muted /></td>
                      <td className={td}><span className="block mx-auto w-[72px] h-[16px] border border-[#aaa] bg-[#cfcfcf]" /></td>
                    </tr>
                  ))}
                </tbody>
              </table>
              <div className="h-[27px] bg-[#b7b7b7] flex items-center justify-center text-[11.5px] text-[#222]">
                <span className="h-[16px] leading-[16px] px-[6px] bg-[#dbe9f8]">Reset Passengers Details</span>
              </div>
              <div className="mt-[4px] h-[25px] bg-[#3563c0] text-[13px] font-bold leading-[25px] pl-[5px] text-white">
                Children Below 5 Years <span className="text-[#d8124f] ml-[3px]">(Ticket Is Not To Be Issued)</span>
              </div>
              <table className="table-fixed border-collapse w-[1004px] text-[11.5px] text-[#222]">
                <colgroup>
                  {childCols.map((w, i) => (
                    <col key={i} style={{ width: w }} />
                  ))}
                </colgroup>
                <thead>
                  <tr className="h-[20px] bg-gradient-to-b from-[#eef5fc] to-[#d3e5f7] font-bold text-[#1f3f72] text-center">
                    {["S. No.", "Name", "Age", "Gender"].map((h) => (
                      <td key={h} className="border border-[#cfcfcf]">{h}</td>
                    ))}
                  </tr>
                </thead>
                <tbody>
                  {[1, 2].map((n) => (
                    <tr key={n} className="h-[27px]">
                      <td className={td}>{n}</td>
                      <td className={td}><span className="block mx-auto w-[107px] h-[15px] border border-[#cfe3f7]" /></td>
                      <td className={td}><FakeSelect w="w-[101px]" label="Select" /></td>
                      <td className={td}><FakeSelect w="w-[60px]" label="Select" /></td>
                    </tr>
                  ))}
                </tbody>
              </table>
              <div className="h-[26px] bg-[#b7b7b7] flex items-center justify-center text-[11.5px] text-[#222]">
                <span className="h-[16px] leading-[16px] px-[6px] bg-[#dbe9f8]">Reset Child Details</span>
              </div>
            </div>
            <div className="-ml-[1px] mt-[4px] w-[1010px] border border-[#cfe3f7] h-[70px] pt-[15px] pl-[14px] flex gap-[4px]">
              <div className="w-[488px] h-[50px] bg-[#f5f5f5] pl-[17px] pt-[16px] text-[11.5px] leading-[22px] font-bold text-[#2f63e0]">
                <div className="flex items-center gap-[5px]"><Check /><span>Consider for Auto Upgradation</span></div>
                <div className="flex items-center gap-[5px]"><Check /><span>Book only if confirm berths are allotted</span></div>
              </div>
              <div className="w-[488px] h-[50px] bg-[#f5f5f5] pl-[11px] pt-[24px] text-[11.8px] leading-[14px] text-[#c2185b]">Berth preference does not guarantee allotment of preferred berth type.</div>
            </div>
          </div>
        </div>
      </div>
    </Frame>
  );
}

// ---------- shot 6 ----------

const payTabs = [
  { h: "h-[36px]", label: "BHIM / UPI / USSD" },
  { h: "h-[43px]", label: "multi" },
  { h: "h-[36px]", label: "Debit Card with PIN" },
  { h: "h-[36px]", label: "Net Banking" },
  { h: "h-[36px]", label: "Wallets/ Cash Cards" },
  { h: "h-[36px]", label: "IRCTC Prepaid" },
  { h: "h-[36px]", label: "IRCTC eWallet" },
  { h: "h-[36px]", label: "Pay On Delivery / Paylater" },
  { h: "h-[36px]", label: "Payment Gateway /Credit /Debit Cards" },
];

function FareLine({ label, value, h }: { label: string; value: string; h: string }) {
  return (
    <div className={`flex items-center justify-between font-bold pr-[12px] ${h}`}>
      <span className="text-[#555]">{label}</span>
      <span className="font-normal text-[#555]">{value}</span>
    </div>
  );
}

function PayShot() {
  return (
    <Frame outer="w-[1000px] h-[501px] pl-[8px] pr-[4px] pt-[7px] pb-[6px]" inner="bg-white border-l-[4px] border-r-[3px] border-[#3563c0] blur-[0.5px]">
      <div className="[zoom:0.669] w-[1470px] h-[760px] font-['Liberation_Sans',sans-serif]">
        <div className="w-[1046px] h-full border-r border-[#dde8f5] pl-[7px] pt-[10px]">
          <div className="w-[1035px] h-[150px] border border-[#cfe3f7] flex pl-[7px] pt-[6px] gap-[9px] text-[11.5px]">
            <div className="w-[507px]">
              <div className="h-[25px] bg-[#3563c0] text-white text-[13px] font-bold leading-[25px] pl-[5px]">Availability Details</div>
              <div className="pt-[3px] leading-[17px] text-[#555]">
                <div className="flex"><b className="w-[255px]">Availability :</b>AVAILABLE-0087</div>
                <div className="flex"><b className="w-[255px]">Availability At :</b>Thu Jan 25 07:09:23 IST 2018 IST</div>
              </div>
            </div>
            <div className="w-[505px]">
              <div className="h-[25px] bg-[#3563c0] text-white text-[13px] font-bold leading-[25px] pl-[5px]">Fare Details</div>
              <div className="pt-[2px]">
                <FareLine label="Ticket Fare :" value="₹ 1845.00 *" h="h-[20px]" />
                <FareLine label="Service Charge (Incl. of GST) #:" value="₹ 0.00" h="h-[28px]" />
                <FareLine label="Travel Insurance Premium (Inclusive of GST):" value="₹ 0.00" h="h-[20px]" />
                <FareLine label="Total Fare :" value="₹ 1845.00" h="h-[22px]" />
                <div className="pl-[8px] font-bold text-[#222] leading-[20px]">* Ticket fare includes total GST of ₹ 88.00</div>
              </div>
            </div>
          </div>
          <div className="mt-[5px] text-[12.2px] leading-[14px] text-[#c2185b]">
            # This availability is for all berths, not for your preferred berth type. As tickets are booked throughout the country across PRS counters, any confirmed status shown above may decline into RAC/ Waiting List status, while your payment being processed.
          </div>
          <div className="mt-[4px] w-[1036px] h-[25px] bg-[#3563c0] text-white text-[13px] font-bold leading-[22px] pl-[5px]">Payment Option</div>
          <div className="mt-[12px] w-[1036px] h-[41px] bg-[#ffab19] text-white text-[12px] leading-[36px] pl-[28px]">
            •&nbsp;&nbsp;User can have a maximum of <span className="text-[#e3001b] font-bold">6</span> Banks in their Preference list. User can manage their Bank Preferences under <i className="text-[#d8124f]">My Profile</i> section.
          </div>
          <div className="mt-[15px] ml-[3px] w-[1030px] h-[411px] border-2 border-[#7fe6f5] pl-[4px] pt-[3px] flex text-[12px] font-bold text-white">
            <div className="w-[218px] shrink-0">
              <div className="h-[36px] bg-[#00a8ff] rounded-[2px] pl-[11px] flex items-center border-b border-[#3b8bd8]">Preferred Banks</div>
              {payTabs.map((t) => (
                <div key={t.label} className={`mt-[4px] ${t.h} bg-[#00d4ff] rounded-[2px] pl-[11px] flex items-center leading-[13px] border-b border-[#3b8bd8]`}>
                  {t.label === "multi" ? (
                    <span>
                      Multiple Payment Service
                      <br />
                      <span className="text-[#e3001b]">(Credit &amp; Debit Cards/ Netbanking
                      <br />/Wallets / International Cards)</span>
                    </span>
                  ) : (
                    t.label
                  )}
                </div>
              ))}
            </div>
            <div className="ml-[10px] mt-[3px] w-[790px] h-[31px] border border-[#ddd] rounded-[2px] shadow-[0_1px_3px_#bbb] bg-white flex items-center pl-[4px] gap-[2px] text-[#1f7fe0] whitespace-nowrap">
              <Radio />
              <span>Visa/Master Card(Powered By AXIS BANK)</span>
              <span className="ml-[13px]">(Payment Gateway /Credit /Debit Cards)</span>
            </div>
          </div>
        </div>
      </div>
    </Frame>
  );
}

// ---------- page ----------

function Heading({ children }: { children: React.ReactNode }) {
  return <h2 className="h-[50px] leading-[50px] text-[37px] font-medium text-[#333] font-['Lato',sans-serif] whitespace-nowrap">{children}</h2>;
}

function Caption({ className, children }: { className: string; children: React.ReactNode }) {
  return <p className={`text-center whitespace-nowrap text-[33px] font-light text-[#444] font-['Lato',sans-serif] ${className}`}>{children}</p>;
}

export default function App() {
  return (
    <div className="w-[2186px] h-[3902px] bg-white overflow-hidden">
      <div className="flex pl-[16px] pt-[56px]">
        <div className="w-[1000px]">
          <Heading>1. Home page</Heading>
          <div className="mt-[24px]"><HomeShot /></div>
          <Caption className="mt-[20px] leading-[45px] pr-[6px]">User is required to login by entering his id, password and a captcha.</Caption>
        </div>
        <div className="w-[1000px] ml-[154px]">
          <Heading>2. Entering journey details</Heading>
          <div className="mt-[24px]"><JourneyShot /></div>
          <Caption className="mt-[20px] leading-[45px] pl-[38px]">
            User enters his travel details - From and to places, date of journey,
            <br />
            type of ticket and submits form.
          </Caption>
        </div>
      </div>

      <div className="ml-[368px] mt-[111px] w-[1501px]">
        <div className="pl-[3px]"><Heading>3. Checking availability</Heading></div>
        <div className="mt-[24px]"><AvailabilityShot /></div>
        <Caption className="mt-[41px] leading-[57px] pl-[20px]">
          In order to check the train route, the user has to click on the train number in blue.
          <br />
          In order to check availability of seats in the selected train, the user has to select the coach's class.
        </Caption>
      </div>

      <div className="ml-[357px] mt-[146px] w-[1543px]">
        <div className="pl-[14px]"><Heading>4. Selecting his ticket</Heading></div>
        <div className="mt-[45px]"><TicketShot /></div>
        <Caption className="mt-[39px] leading-[56px] pl-[28px]">
          The user's can select the train, class and date of his choice and proceed to book his ticket. The users can use
          <br />
          the filters of the LHS for a faster search.
        </Caption>
        <div className="mt-[46px] ml-[14px] w-[1543px] h-[133px] box-border border-2 border-dashed border-[#dedede] rounded-[6px] bg-[#f9f9f9] flex items-center justify-center">
          <Caption className="">The user needs to repeat this step several times to find the train and coach on the date of his choice.</Caption>
        </div>
      </div>

      <div className="flex pl-[10px] mt-[130px]">
        <div className="w-[1000px]">
          <div className="-ml-[2px]"><Heading>5. Payment details</Heading></div>
          <div className="mt-[23px]"><PaymentShot /></div>
          <Caption className="mt-[43px] leading-[53px] pl-[20px]">
            The user must enter minimum details namely his name, age, gender,
            <br />
            phone number and a captcha to proceed to payment.
          </Caption>
        </div>
        <div className="w-[1000px] ml-[164px]">
          <div className="-ml-[6px]"><Heading>6. Entering the traveller details</Heading></div>
          <div className="mt-[23px]"><PayShot /></div>
          <Caption className="mt-[83px] leading-[53px] pl-[18px]">Reconfirming details and selecting the payment method.</Caption>
        </div>
      </div>
    </div>
  );
}
